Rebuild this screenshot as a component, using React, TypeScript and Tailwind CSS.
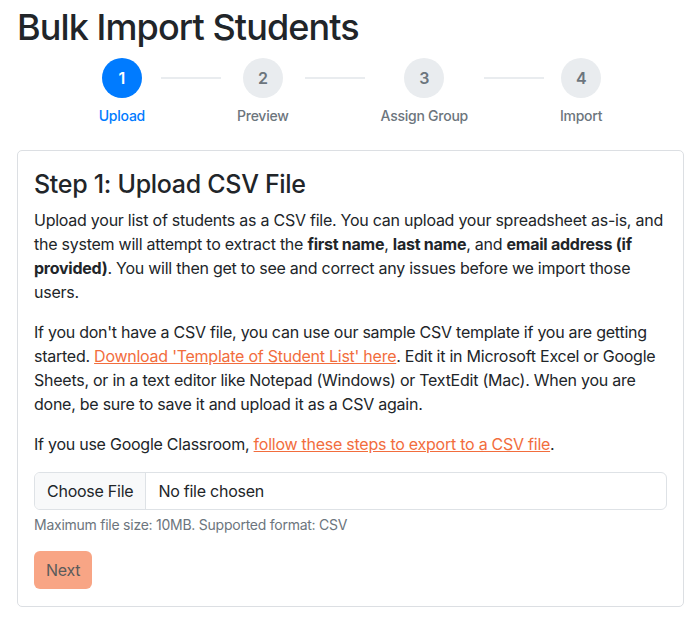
import React from "react";

const steps = [
  { n: 1, label: "Upload", active: true },
  { n: 2, label: "Preview", active: false },
  { n: 3, label: "Assign Group", active: false },
  { n: 4, label: "Import", active: false },
];

function Stepper() {
  return (
    <div className="flex justify-center items-start gap-4 mt-[9px]">
      {steps.map((s, i) => (
        <React.Fragment key={s.n}>
          {i > 0 && <div className="w-[60px] h-[2px] bg-[#e9ecef] mt-[19px]" />}
          <div className="flex flex-col items-center">
            <div
              className={
                s.active
                  ? "w-10 h-10 rounded-full bg-[#007bff] text-white flex items-center justify-center text-base font-semibold"
                  : "w-10 h-10 rounded-full bg-[#e9ecef] text-[#6c757d] flex items-center justify-center text-base font-semibold"
              }
            >
              {s.n}
            </div>
            <div
              className={
                s.active
                  ? "mt-[7px] text-sm leading-[21px] text-[#007bff] font-medium"
                  : "mt-[7px] text-sm leading-[21px] text-[#6c757d] font-medium"
              }
            >
              {s.label}
            </div>
          </div>
        </React.Fragment>
      ))}
    </div>
  );
}

export default function App() {
  return (
    <div className="min-h-screen bg-white text-[#212529] font-['Inter','Liberation_Sans',sans-serif] tracking-[-0.25px] pl-[17px] pr-[12px] pt-[6px]">
      <h1 className="text-[36px] leading-[43px] font-medium tracking-[-0.9px]">Bulk Import Students</h1>
      <Stepper />

      <div className="mt-[24px] border border-[#dcdfe3] rounded-[5px] px-4 pt-[18px] pb-[17px]">
        <h4 className="text-[25px] leading-[30px] font-medium tracking-[-0.3px] mb-[9px]">Step 1: Upload CSV File</h4>
        <p className="text-base leading-6 mb-4">
          Upload your list of students as a CSV file. You can upload your spreadsheet as-is, and the system will
          attempt to extract the <b className="font-bold">first name</b>, <b className="font-bold">last name</b>, and{" "}
          <b className="font-bold">email address (if provided)</b>. You will then get to see and correct any issues
          before we import those users.
        </p>
        <p className="text-base leading-6 mb-4">
          If you don't have a CSV file, you can use our sample CSV template if you are getting started.{" "}
          <a href="#" className="text-[#f26d3d] underline">
            Download 'Template of Student List' here
          </a>
          . Edit it in Microsoft Excel or Google Sheets, or in a text editor like Notepad (Windows) or TextEdit (Mac).
          When you are done, be sure to save it and upload it as a CSV again.
        </p>
        <p className="text-base leading-6 mb-4">
          If you use Google Classroom,{" "}
          <a href="#" className="text-[#f26d3d] underline">
            follow these steps to export to a CSV file
          </a>
          .
        </p>

        <div className="flex h-[38px] border border-[#dee2e6] rounded-[6px] overflow-hidden">
          <div className="px-3 flex items-center bg-[#f8f9fa] border-r border-[#dee2e6] text-base">Choose File</div>
          <div className="px-3 flex items-center text-base">No file chosen</div>
        </div>
        <div className="mt-1 text-sm leading-[21px] text-[#6c757d]">Maximum file size: 10MB. Supported format: CSV</div>

        <button className="mt-4 h-[38px] px-3 rounded-[6px] bg-[#f8a585] text-[#5b5b5b] text-base">Next</button>
      </div>
    </div>
  );
}
